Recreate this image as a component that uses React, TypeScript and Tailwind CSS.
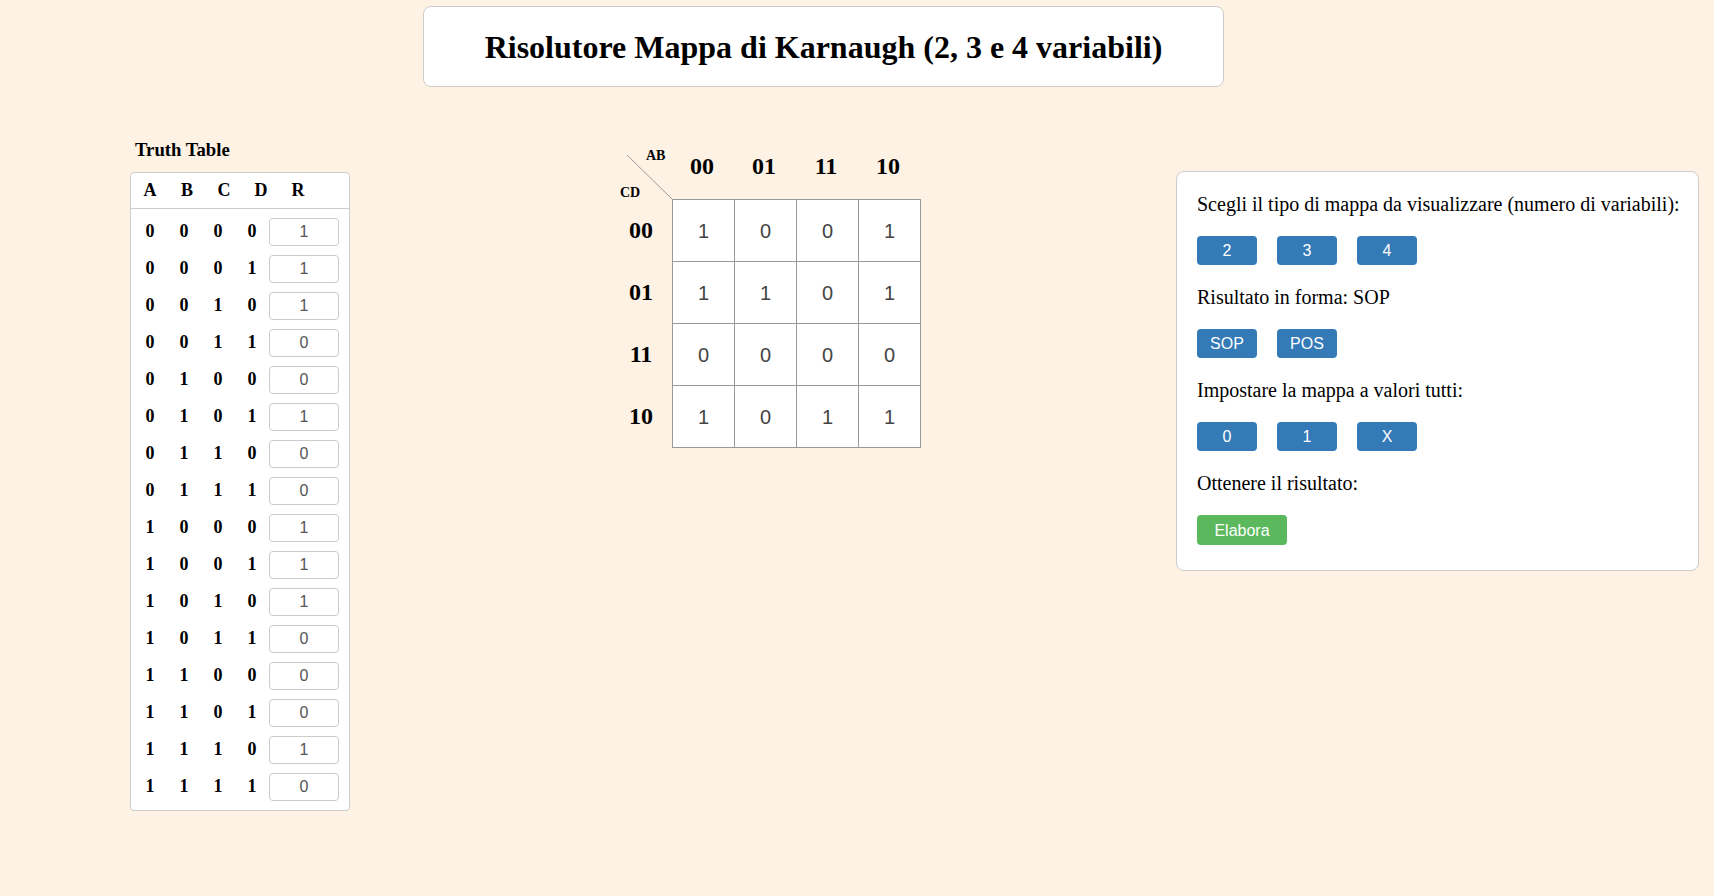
import React from "react";

const rows: [string, string, string, string, string][] = [
  ["0", "0", "0", "0", "1"],
  ["0", "0", "0", "1", "1"],
  ["0", "0", "1", "0", "1"],
  ["0", "0", "1", "1", "0"],
  ["0", "1", "0", "0", "0"],
  ["0", "1", "0", "1", "1"],
  ["0", "1", "1", "0", "0"],
  ["0", "1", "1", "1", "0"],
  ["1", "0", "0", "0", "1"],
  ["1", "0", "0", "1", "1"],
  ["1", "0", "1", "0", "1"],
  ["1", "0", "1", "1", "0"],
  ["1", "1", "0", "0", "0"],
  ["1", "1", "0", "1", "0"],
  ["1", "1", "1", "0", "1"],
  ["1", "1", "1", "1", "0"],
];

const grayCode = ["00", "01", "11", "10"];

const kmap = [
  ["1", "0", "0", "1"],
  ["1", "1", "0", "1"],
  ["0", "0", "0", "0"],
  ["1", "0", "1", "1"],
];

function TruthTable() {
  return (
    <div className="ml-[130px] w-[220px]">
      <h3 className="pl-[5px] text-[18.72px] font-bold leading-[22px]">Truth Table</h3>
      <div className="mt-[11px] rounded-[4px] border border-[#ccc] bg-white pb-[5px]">
        <div className="flex h-[36px] items-center border-b border-[#ccc] pl-[0.5px] text-[18px] font-bold">
          {["A", "B", "C", "D", "R"].map((h) => (
            <span key={h} className="w-[37px] text-center">
              {h}
            </span>
          ))}
        </div>
        <div className="pt-[4px]">
          {rows.map((r, i) => (
            <div key={i} className="flex h-[37px] items-center pl-[2px]">
              {r.slice(0, 4).map((d, j) => (
                <span key={j} className="w-[34px] text-center text-[18px] font-bold">
                  {d}
                </span>
              ))}
              <input
                readOnly
                value={r[4]}
                className="h-[28px] w-[70px] rounded-[4px] border border-[#ccc] bg-white text-center font-['Liberation_Sans',Arial,sans-serif] text-[16px] text-[#555] outline-none"
              />
            </div>
          ))}
        </div>
      </div>
    </div>
  );
}

function KMap() {
  return (
    <div className="ml-[270px] flex flex-col">
      <div className="flex">
        <div className="relative h-[60px] w-[52px]">
          <svg className="absolute left-0 top-0" width="52" height="60">
            <line x1="7" y1="16" x2="52" y2="60" stroke="#999" strokeWidth="1" />
          </svg>
          <span className="absolute left-[26px] top-[9px] text-[14px] font-bold leading-[16px]">AB</span>
          <span className="absolute left-0 top-[46px] text-[14px] font-bold leading-[16px]">CD</span>
        </div>
        {grayCode.map((c) => (
          <div key={c} className="w-[62px] pr-[2px] pt-[13px] text-center text-[24px] font-bold leading-[28px]">
            {c}
          </div>
        ))}
      </div>
      <div className="flex">
        <div className="flex w-[52px] flex-col">
          {grayCode.map((c) => (
            <div key={c} className="flex h-[62px] items-center justify-center pr-[10px] text-[24px] font-bold">
              {c}
            </div>
          ))}
        </div>
        <div className="border-l border-t border-[#999] bg-white">
          {kmap.map((row, i) => (
            <div key={i} className="flex">
              {row.map((v, j) => (
                <div
                  key={j}
                  className="flex h-[62px] w-[62px] items-center justify-center border-b border-r border-[#999] font-['Liberation_Sans',Arial,sans-serif] text-[20px] text-[#444]"
                >
                  {v}
                </div>
              ))}
            </div>
          ))}
        </div>
      </div>
    </div>
  );
}

function Btn({ label, green }: { label: string; green?: boolean }) {
  return (
    <button
      className={
        green
          ? "h-[30px] w-[90px] rounded-[4px] bg-[#5cb85c] font-['Liberation_Sans',Arial,sans-serif] text-[16px] text-white"
          : "h-[29px] w-[60px] rounded-[4px] bg-[#337ab7] font-['Liberation_Sans',Arial,sans-serif] text-[16px] text-white"
      }
    >
      {label}
    </button>
  );
}

function Controls() {
  return (
    <div className="ml-[255px] mt-[32px] flex w-[523px] flex-col gap-[20.5px] rounded-[8px] border border-[#ccc] bg-white px-[20px] pb-[25px] pt-[20.5px] text-[20px] leading-[23px]">
      <p className="whitespace-nowrap">Scegli il tipo di mappa da visualizzare (numero di variabili):</p>
      <div className="flex gap-[20px]">
        <Btn label="2" />
        <Btn label="3" />
        <Btn label="4" />
      </div>
      <p>Risultato in forma: SOP</p>
      <div className="flex gap-[20px]">
        <Btn label="SOP" />
        <Btn label="POS" />
      </div>
      <p>Impostare la mappa a valori tutti:</p>
      <div className="flex gap-[20px]">
        <Btn label="0" />
        <Btn label="1" />
        <Btn label="X" />
      </div>
      <p>Ottenere il risultato:</p>
      <div className="flex">
        <Btn label="Elabora" green />
      </div>
    </div>
  );
}

export default function App() {
  return (
    <div className="min-h-screen bg-[#fef2e4] pb-10 font-['Liberation_Serif','Times_New_Roman',serif] text-black">
      <div className="pl-[423px] pt-[6px]">
        <div className="flex h-[81px] w-[801px] items-center justify-center rounded-[8px] border border-[#ccc] bg-white">
          <h1 className="text-[32px] font-bold">Risolutore Mappa di Karnaugh (2, 3 e 4 variabili)</h1>
        </div>
      </div>
      <div className="mt-[52px] flex items-start">
        <TruthTable />
        <KMap />
        <Controls />
      </div>
    </div>
  );
}
